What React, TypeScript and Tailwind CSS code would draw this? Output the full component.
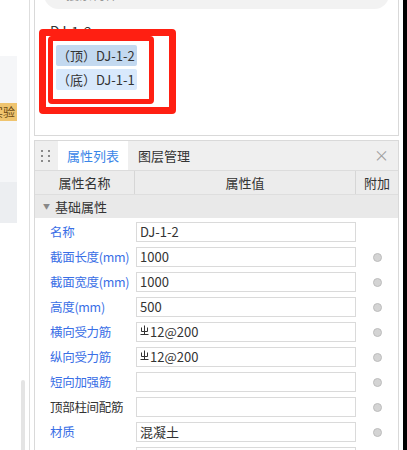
import React from 'react';

const font = { fontFamily: '"Noto Sans CJK SC", "Noto Sans", sans-serif' };

type Row = { label: string; value?: string; rebar?: boolean; blue: boolean; dot: boolean };

const rows: Row[] = [
  { label: '名称', value: 'DJ-1-2', blue: true, dot: false },
  { label: '截面长度(mm)', value: '1000', blue: true, dot: true },
  { label: '截面宽度(mm)', value: '1000', blue: true, dot: true },
  { label: '高度(mm)', value: '500', blue: true, dot: true },
  { label: '横向受力筋', value: '12@200', rebar: true, blue: true, dot: true },
  { label: '纵向受力筋', value: '12@200', rebar: true, blue: true, dot: true },
  { label: '短向加强筋', blue: true, dot: true },
  { label: '顶部柱间配筋', blue: false, dot: true },
  { label: '材质', value: '混凝土', blue: true, dot: true },
  { label: '', blue: true, dot: true },
];

function RebarMark() {
  return (
    <svg width="9" height="11" viewBox="0 0 9 11" className="mr-[1px] -mt-[4px] shrink-0">
      <path d="M4.5 0.5 V9.5 M1.5 2.5 V6.5 H7.5 V2.5 M0.5 9.5 H8.5" stroke="#333" strokeWidth="1" fill="none" />
    </svg>
  );
}

export default function App() {
  return (
    <div className="w-[407px] h-[450px] overflow-hidden flex bg-white text-[#333]" style={font}>
      {/* left edge of the neighbouring pane */}
      <div className="w-[29px] shrink-0 flex">
        <div className="w-[17px] flex flex-col">
          <div className="h-[56px]" />
          <div className="h-[126px] bg-[#f5f6f8] pt-[47px]">
            <div className="h-[18px] bg-[#efc46f] text-[12px] leading-[18px] text-[#6b4a12] overflow-hidden whitespace-nowrap pr-[2px] flex justify-end">
              <span>实验</span>
            </div>
          </div>
          <div className="h-[41px] bg-[#eceef1]" />
        </div>
        <div className="flex-1 flex flex-col">
          <div className="flex-1" />
          <div className="ml-[4px] w-[4px] h-[70px] bg-[#e4e4e4] rounded-t" />
        </div>
      </div>
      <div className="w-px shrink-0 bg-[#dedede]" />

      <div className="flex-1 flex flex-col pl-[4px] pr-[4px]">
        {/* component tree panel */}
        <div className="relative -mt-[20px] h-[156px] shrink-0 border border-[#d9d9d9] border-t-0">
          <div className="mx-[9px] h-[29px] rounded-full bg-[#f2f2f2] flex items-center pl-[22px] pr-[14px] text-[13px] text-[#999]">
            <span className="-mt-[1px]">搜索构件...</span>
            <span className="ml-auto text-[#aaa] text-[12px] -mt-[1px]">⌕</span>
          </div>
          <div className="pl-[15px] pt-[12px] text-[14px] leading-[20px] text-[#333]">DJ-1-2</div>
          <div className="pl-[21px] pt-[4px] flex flex-col gap-[3px] text-[13px]">
            <div className="w-[81px] h-[21px] rounded-[2px] bg-[#c3d9f0] leading-[21px] pl-[1px] whitespace-nowrap">（顶）DJ-1-2</div>
            <div className="w-[81px] h-[21px] rounded-[2px] bg-[#d8e9fc] leading-[21px] pl-[1px] whitespace-nowrap">（底）DJ-1-1</div>
          </div>
          {/* annotation frames */}
          <div className="absolute left-[4px] top-[49px] w-[137px] h-[85px] border-[7px] border-[#ff1f12] rounded-[4px]" />
          <div className="absolute left-[13px] top-[56px] w-[106px] h-[68px] border-[5px] border-[#ff1f12] rounded-[4px]" />
        </div>

        {/* properties panel */}
        <div className="mt-[4px] flex-1 border border-[#d9d9d9] flex flex-col">
          <div className="h-[30px] shrink-0 bg-[#efefef] flex items-stretch text-[13px] border-b border-[#dcdcdc]">
            <div className="w-[23px] grid grid-cols-2 gap-x-[2px] gap-y-[3px] content-center justify-center px-[6px]">
              {Array.from({ length: 6 }).map((_, i) => (
                <span key={i} className="w-[2px] h-[2px] bg-[#8a8a8a]" />
              ))}
            </div>
            <div className="bg-white text-[#3a86e8] px-[9px] flex items-center">属性列表</div>
            <div className="ml-[10px] flex items-center">图层管理</div>
            <div className="ml-auto mr-[9px] flex items-center text-[#a0a0a0] text-[15px]">×</div>
          </div>
          <div className="h-[24px] shrink-0 bg-[#ececec] flex text-[13px] leading-[24px] border-b border-[#dedede]">
            <div className="w-[100px] text-center border-r border-[#d6d6d6]">属性名称</div>
            <div className="w-[221px] text-center border-r border-[#d6d6d6]">属性值</div>
            <div className="flex-1 text-center">附加</div>
          </div>
          <div className="h-[23px] shrink-0 bg-[#e9e9e9] flex items-center text-[13px]">
            <span className="ml-[8px] text-[7px] text-[#888]">▼</span>
            <span className="ml-[5px]">基础属性</span>
          </div>
          <div className="pt-[4px] flex flex-col">
            {rows.map((r, i) => (
              <div key={i} className="h-[25px] shrink-0 flex items-start">
                <div className={`w-[101px] pl-[15px] h-[20px] leading-[20px] whitespace-nowrap text-[12.5px] tracking-[-0.3px] ${r.blue ? 'text-[#3a6fe6]' : 'text-[#333]'}`}>
                  {r.label}
                </div>
                <div className="w-[220px] h-[20px] border border-[#dadada] flex items-center pl-[3px] leading-[18px] whitespace-nowrap text-[13px]">
                  {r.rebar && <RebarMark />}
                  {r.value}
                </div>
                <div className="flex-1 h-[20px] flex items-center justify-center">
                  {r.dot && <span className="w-[9px] h-[9px] rounded-full bg-[#d4d4d4] border border-[#bdbdbd]" />}
                </div>
              </div>
            ))}
          </div>
        </div>
      </div>

      <div className="w-[4px] shrink-0 bg-black" />
    </div>
  );
}
